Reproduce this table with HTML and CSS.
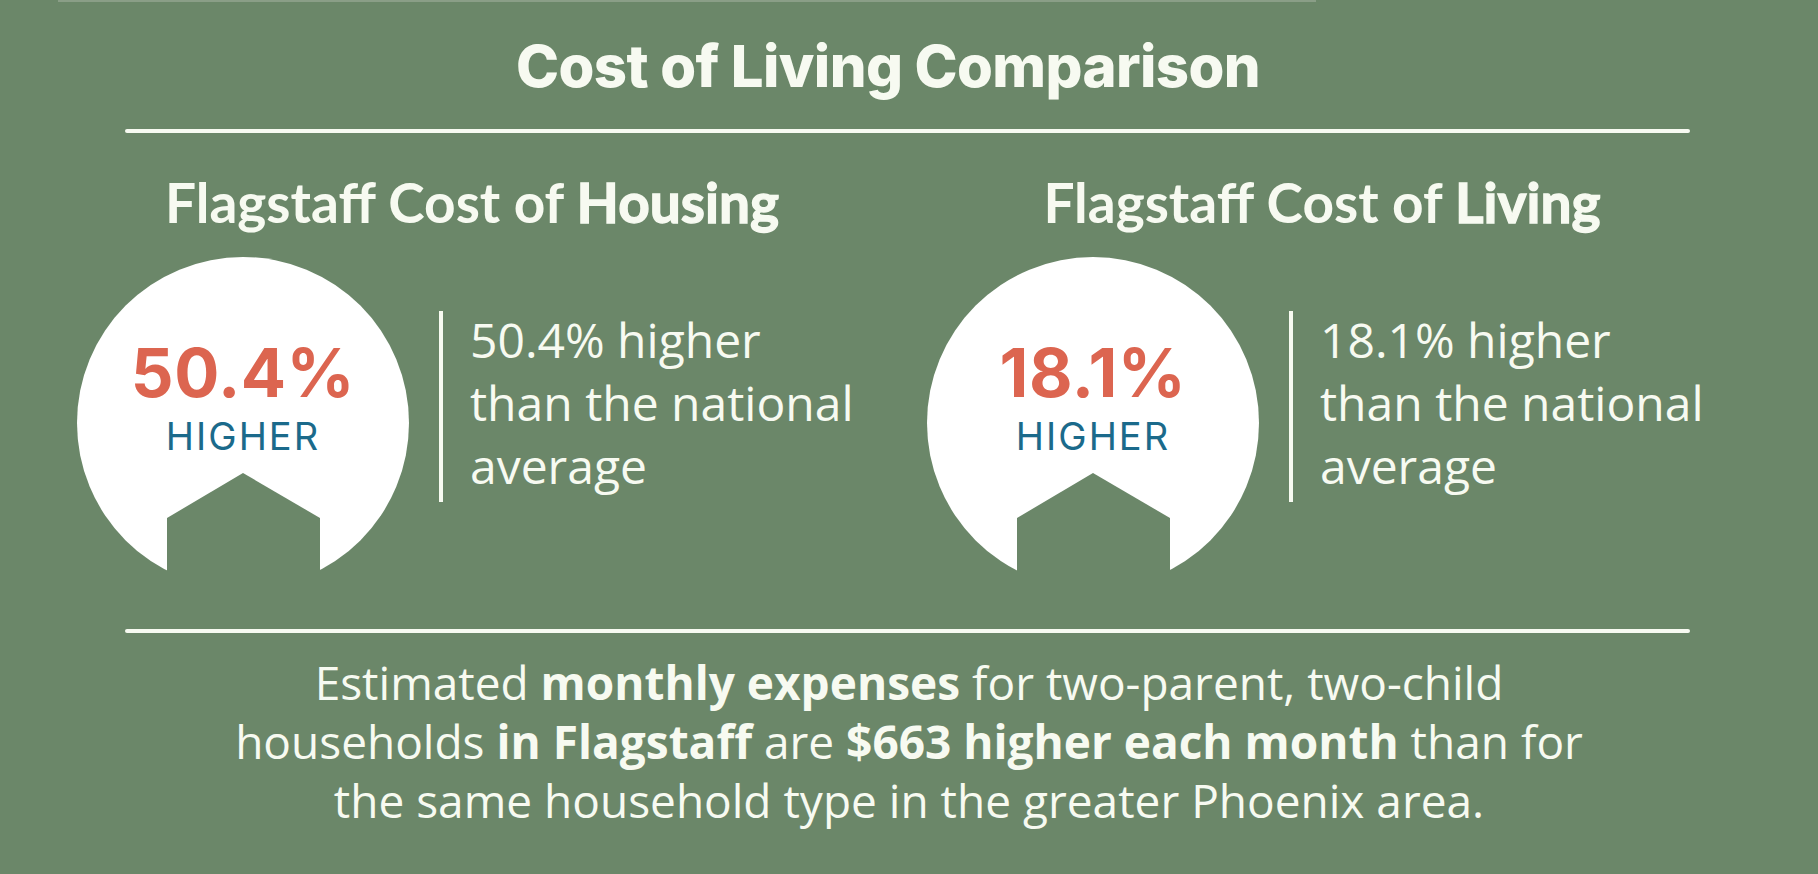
FILE: index.html
```html
<!DOCTYPE html>
<html lang="en">
<head>
<meta charset="utf-8">
<title>Cost of Living Comparison</title>
<link rel="stylesheet" href="styles.css">
</head>
<body>
<div class="strip"></div>
<main class="page">
  <h1 class="title">Cost of Living Comparison</h1>
  <div class="rule"></div>
  <div class="columns">
    <section class="group">
      <h2 class="heading">Flagstaff Cost of <b>Housing</b></h2>
      <div class="row">
        <div class="badge">
          <svg class="badge-shape" viewBox="0 0 332 332" width="332" height="332" aria-hidden="true">
            <circle class="disc" cx="166" cy="166" r="166"/>
            <path class="house" d="M90 261 L166 216 L243 261 L243 340 L90 340 Z"/>
          </svg>
          <div class="badge-text">
            <div class="pct">50.4%</div>
            <div class="higher">HIGHER</div>
          </div>
        </div>
        <div class="divider"></div>
        <p class="desc">50.4% higher<br>than the national<br>average</p>
      </div>
    </section>
    <section class="group">
      <h2 class="heading">Flagstaff Cost of <b>Living</b></h2>
      <div class="row">
        <div class="badge">
          <svg class="badge-shape" viewBox="0 0 332 332" width="332" height="332" aria-hidden="true">
            <circle class="disc" cx="166" cy="166" r="166"/>
            <path class="house" d="M90 261 L166 216 L243 261 L243 340 L90 340 Z"/>
          </svg>
          <div class="badge-text">
            <div class="pct">18.1%</div>
            <div class="higher">HIGHER</div>
          </div>
        </div>
        <div class="divider"></div>
        <p class="desc">18.1% higher<br>than the national<br>average</p>
      </div>
    </section>
  </div>
  <div class="rule rule-bottom"></div>
  <p class="summary">Estimated <b>monthly expenses</b> for two-parent, two-child<br>households <b>in Flagstaff</b> are <b>$663 higher each month</b> than for<br>the same household type in the greater Phoenix area.</p>
</main>
</body>
</html>
```

FILE: styles.css
```css
:root {
  --bg: #6b8769;
  --ink: #f7faf1;
  --red: #dc6550;
  --blue: #1b6a8b;
}

* { box-sizing: border-box; }

html, body {
  margin: 0;
  padding: 0;
}

body {
  width: 1818px;
  height: 874px;
  overflow: hidden;
  background: var(--bg);
  color: var(--ink);
  font-family: "Open Sans", "Liberation Sans", sans-serif;
}

.strip {
  height: 2px;
  width: 1258px;
  margin-left: 58px;
  background: #8a9e87;
}

.page {
  display: flex;
  flex-direction: column;
}

.title {
  margin: 34px 0 0;
  padding-right: 42px;
  font-family: Inter, "Liberation Sans", sans-serif;
  font-weight: 800;
  font-size: 58px;
  line-height: 60px;
  text-align: center;
  letter-spacing: -0.6px;
}

.rule {
  height: 4px;
  margin: 33px 128px 0 125px;
  background: var(--ink);
  border-radius: 2px;
}

.rule-bottom {
  margin-top: 40px;
}

.columns {
  display: flex;
  gap: 69px;
  padding-left: 77px;
  margin-top: 41px;
}

.group {
  width: 781px;
  display: flex;
  flex-direction: column;
}

.heading {
  margin: 0;
  padding-left: 9px;
  font-family: Lato, "Liberation Sans", sans-serif;
  font-weight: 700;
  font-size: 55px;
  line-height: 56px;
  text-align: center;
}

.heading b {
  font-weight: 700;
  -webkit-text-stroke: 1.3px var(--ink);
}

.row {
  display: flex;
  align-items: flex-start;
  margin-top: 27px;
}

.badge {
  position: relative;
  flex: none;
  width: 332px;
  height: 332px;
}

.badge-shape {
  position: absolute;
  left: 0;
  top: 0;
  display: block;
}

.disc { fill: #ffffff; }
.house { fill: var(--bg); }

.badge-text {
  position: relative;
  padding-top: 82px;
  text-align: center;
  font-family: Inter, "Liberation Sans", sans-serif;
}

.pct {
  color: var(--red);
  font-weight: 700;
  font-size: 67px;
  line-height: 67px;
  letter-spacing: 0.5px;
}

.higher {
  margin-top: 12px;
  color: var(--blue);
  font-weight: 400;
  font-size: 38px;
  line-height: 37px;
  letter-spacing: 2px;
}

.divider {
  flex: none;
  width: 4px;
  height: 191px;
  margin: 54px 27px 0 30px;
  background: var(--ink);
}

.desc {
  margin: 51px 0 0;
  font-size: 48px;
  line-height: 63px;
  font-weight: 400;
  white-space: nowrap;
}

.summary {
  margin: 20px 0 0;
  font-size: 46px;
  line-height: 59px;
  text-align: center;
  white-space: nowrap;
}

.summary b {
  font-weight: 700;
}
```
